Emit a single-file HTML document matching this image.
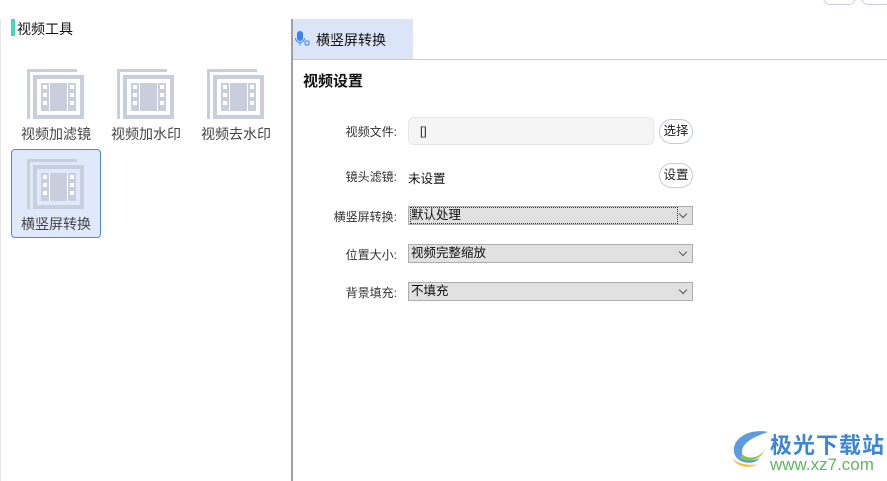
<!DOCTYPE html>
<html><head><meta charset="utf-8"><style>
*{margin:0;padding:0;box-sizing:border-box}
body{width:887px;height:481px;background:#fff;position:relative;overflow:hidden;font-family:"Liberation Sans","Noto Sans CJK SC",sans-serif;color:#222}
.a{position:absolute}
.lbl{position:absolute;right:490px;font-size:12px;color:#333;white-space:nowrap}
.sel{position:absolute;left:408px;width:285px;height:19px;background:#e1e1e1;border:1px solid #adadad;font-size:12.5px;line-height:17px;padding-left:2px;color:#111}
.sel:after{content:"";position:absolute;right:6px;top:4px;width:5px;height:5px;border-right:1px solid #555;border-bottom:1px solid #555;transform:rotate(45deg)}
.btn{position:absolute;left:659px;width:34px;height:25px;border:1px solid #c4cbe0;border-radius:13px;font-size:12.5px;line-height:23px;text-align:center;background:#fff}
.ic{position:absolute;width:58px;height:50px}
.tl{position:absolute;font-size:14px;color:#444;white-space:nowrap}
</style></head><body>
<div class="a" style="left:0;top:19px;width:1px;height:462px;background:#e6e6e6"></div>
<div class="a" style="left:823px;top:-10px;width:33px;height:15px;border:1px solid #c8cde0;border-radius:8px"></div>
<div class="a" style="left:861px;top:-10px;width:33px;height:15px;border:1px solid #c8cde0;border-radius:8px"></div>
<div class="a" style="left:11px;top:19px;width:4px;height:17px;background:#3ddbb4"></div>
<div class="a" style="left:17px;top:19px;font-size:14px;color:#111">视频工具</div>

<svg width="0" height="0" style="position:absolute"><defs><g id="fi" fill="#c9cedd">
<path d="M0 0h50v3H3v47H0z"/><path d="M6 6h51v44H6zM10 10v36h43V10z" fill-rule="evenodd"/>
<path d="M14 14h35v28H14z"/></g>
<g id="fh" fill="#fff"><rect x="16" y="16" width="4" height="4"/><rect x="16" y="24" width="4" height="4"/><rect x="16" y="32" width="4" height="4"/><rect x="43" y="16" width="4" height="4"/><rect x="43" y="24" width="4" height="4"/><rect x="43" y="32" width="4" height="4"/><rect x="22" y="14" width="1" height="28"/><rect x="40" y="14" width="1" height="28"/></g></defs></svg>

<svg class="ic" style="left:27px;top:69px" viewBox="0 0 58 50"><use href="#fi"/><use href="#fh"/></svg>
<svg class="ic" style="left:117px;top:69px" viewBox="0 0 58 50"><use href="#fi"/><use href="#fh"/></svg>
<svg class="ic" style="left:207px;top:69px" viewBox="0 0 58 50"><use href="#fi"/><use href="#fh"/></svg>
<div class="tl" style="left:21px;top:124px">视频加滤镜</div>
<div class="tl" style="left:111px;top:124px">视频加水印</div>
<div class="tl" style="left:201px;top:124px">视频去水印</div>
<div class="a" style="left:11px;top:149px;width:90px;height:89px;background:#e0e8fb;border:1px solid #4a86e8;border-radius:4px"></div>
<svg class="ic" style="left:27px;top:159px" viewBox="0 0 58 50"><use href="#fi"/><use href="#fh" style="fill:#e0e8fb"/></svg>
<div class="tl" style="left:21px;top:214px">横竖屏转换</div>

<div class="a" style="left:291px;top:19px;width:2px;height:462px;background:#a0a0a0"></div>
<div class="a" style="left:293px;top:19px;width:120px;height:40px;background:#dce4f7"></div>
<div class="a" style="left:293px;top:59px;width:594px;height:1px;background:#c8ccd4"></div>
<svg class="a" style="left:295px;top:31px" width="18" height="18" viewBox="0 0 18 18"><rect x="2" y="0" width="6" height="10" rx="3" fill="#3b82f6"/><path d="M0.5 7a4.5 4.5 0 0 0 9 0M5 11.5v3" stroke="#3b82f6" fill="none" stroke-width="1"/><rect x="10" y="10" width="4" height="4" rx="1" fill="none" stroke="#3b82f6"/></svg>
<div class="a" style="left:316px;top:30px;font-size:14px;color:#111">横竖屏转换</div>
<div class="a" style="left:303px;top:70px;font-size:15px;font-weight:bold;color:#111">视频设置</div>

<div class="lbl" style="top:123px">视频文件:</div>
<div class="a" style="left:408px;top:117px;width:246px;height:28px;background:#f5f5f5;border:1px solid #e6e6e6;border-radius:6px;font-size:12px;line-height:26px;padding-left:11px">[]</div>
<div class="btn" style="top:119px">选择</div>
<div class="lbl" style="top:168px">镜头滤镜:</div>
<div class="a" style="left:408px;top:168px;font-size:12.5px;color:#111">未设置</div>
<div class="btn" style="top:163px">设置</div>
<div class="lbl" style="top:208px">横竖屏转换:</div>
<div class="sel" style="top:206px"><span style="outline:1px dotted #333;display:inline-block;width:266px;line-height:15px">默认处理</span></div>
<div class="lbl" style="top:246px">位置大小:</div>
<div class="sel" style="top:244px">视频完整缩放</div>
<div class="lbl" style="top:284px">背景填充:</div>
<div class="sel" style="top:282px">不填充</div>

<svg class="a" style="left:728px;top:428px" width="44" height="42" viewBox="0 0 44 42"><path d="M40 4C22 0 4 10 6 24c2 12 20 14 26 6-8 4-18 2-18-6 0-10 14-16 26-20z" fill="#5b9be0"/><path d="M14 26c6 6 18 4 22-4-2 8-14 14-24 8z" fill="#8cc63f"/><path d="M4 30c4 8 16 12 26 6-8 2-20 0-26-6z" fill="#f5c242"/></svg>
<div class="a" style="left:770px;top:428px;font-size:22px;font-weight:bold;color:#3d86d6;letter-spacing:1px">极光下载站</div>
<div class="a" style="left:770px;top:455px;font-size:17px;color:#5cb85c">www.xz7.com</div>
</body></html>
